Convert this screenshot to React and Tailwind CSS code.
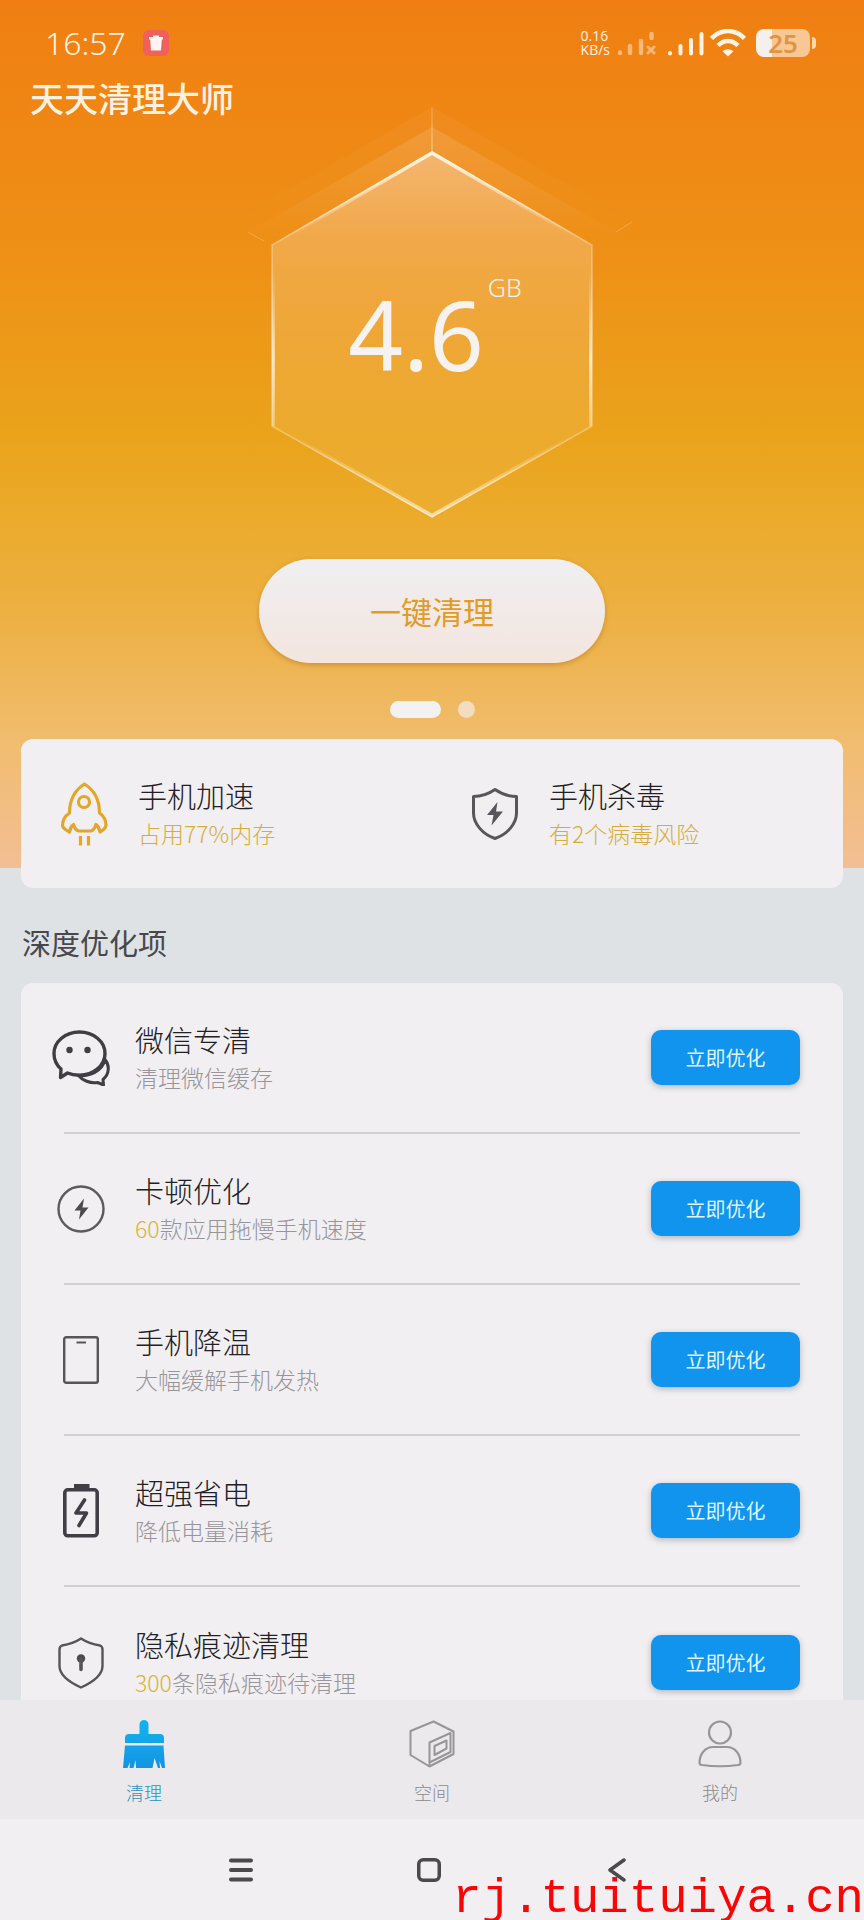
const CJK = "font-['Noto_Sans_CJK_SC',sans-serif]";

function StatusBar() {
  return (
    <div className="flex h-[86px] items-center pl-[45px] pr-[48px] text-[#fdf3e4]">
      <span className="font-['Noto_Sans',sans-serif] text-[32px] leading-[40px] font-light">16:57</span>
      <svg className="ml-4 h-7 w-7" viewBox="0 0 28 28" aria-hidden="true">
        <rect x="1" y="1" width="26" height="26" rx="6" fill="#f0605c" />
        <path d="M7 8h4V6.500h6V8h4v2.500h-1.200L19 21.500H9L8.200 10.500H7Z" fill="#fdf5f2" />
      </svg>
      <div className="ml-auto flex items-center">
        <div className="font-['Open_Sans',sans-serif] text-[14px] leading-[14px]">
          <div>0.16</div>
          <div>KB/s</div>
        </div>
        <svg className="ml-1.5 h-7 w-10" viewBox="0 0 40 28" aria-hidden="true" stroke="#f8b878" strokeWidth="4.500" strokeLinecap="round">
          <path d="M4 23.500v.5M14 17v7M25 12v12M35.500 5v4" />
          <path d="M32 18l6 6M38 18l-6 6" strokeWidth="3" />
        </svg>
        <svg className="ml-2.5 h-7 w-10" viewBox="0 0 40 28" aria-hidden="true" stroke="#fdf3e4" strokeWidth="4" strokeLinecap="round">
          <path d="M4 24v.5M14.500 17v7.500M25 11v13.500M35.500 5v19.500" />
        </svg>
        <svg className="ml-1 h-7 w-9" viewBox="0 0 36 28" aria-hidden="true" fill="none" stroke="#fdf3e4" strokeWidth="4.500">
          <path d="M1.500 9.500C11 -.5 25 -.5 34.500 9.500" />
          <path d="M8 16.500C14 10.500 22 10.500 28 16.500" />
          <path d="M18 27.500l-5.500-5.200C15.500 19.500 20.500 19.500 23.500 22.300Z" fill="#fdf3e4" stroke="none" />
        </svg>
        <div className="ml-2.5 flex items-center gap-0.5">
          <div className="flex h-7 w-[54px] items-center justify-center rounded-lg bg-linear-to-r from-[#f5f0ee] from-30% to-[#f8c894] to-30% font-['Noto_Sans',sans-serif] text-[26px] leading-7 font-semibold text-[#df9446]">
            25
          </div>
          <div className="h-3 w-1 rounded-r-full bg-[#fbd9b4]" />
        </div>
      </div>
    </div>
  );
}

function Hexagon() {
  return (
    <svg className="absolute inset-0 h-full w-full overflow-visible" viewBox="0 0 400 420" fill="none" aria-hidden="true">
      <defs>
        <linearGradient id="face" x1="0" y1="0" x2="0" y2="1">
          <stop offset="0" stopColor="#f8d8b8" stopOpacity=".46" />
          <stop offset=".5" stopColor="#f4d090" stopOpacity=".26" />
          <stop offset="1" stopColor="#f4d080" stopOpacity=".08" />
        </linearGradient>
        <linearGradient id="halo" x1="0" y1="0" x2="0" y2="1">
          <stop offset="0" stopColor="#fff" stopOpacity=".13" />
          <stop offset=".3" stopColor="#fff" stopOpacity="0" />
        </linearGradient>
        <linearGradient id="edge" x1="0" y1="0" x2="0" y2="1">
          <stop offset="0" stopColor="#fff4dc" />
          <stop offset=".25" stopColor="#fff" stopOpacity=".3" />
          <stop offset=".5" stopColor="#fff" stopOpacity=".5" />
          <stop offset=".78" stopColor="#fff" stopOpacity=".3" />
          <stop offset="1" stopColor="#fff0d8" stopOpacity=".7" />
        </linearGradient>
        <linearGradient id="shineX" gradientUnits="userSpaceOnUse" x1="60" y1="0" x2="340" y2="0">
          <stop offset="0" stopColor="#fff4dc" stopOpacity="0" />
          <stop offset=".5" stopColor="#fff4dc" />
          <stop offset="1" stopColor="#fff4dc" stopOpacity="0" />
        </linearGradient>
        <linearGradient id="shineY" gradientUnits="userSpaceOnUse" x1="0" y1="180" x2="0" y2="400">
          <stop offset="0" stopColor="#fff" stopOpacity="0" />
          <stop offset=".4" stopColor="#fff" stopOpacity=".75" />
          <stop offset="1" stopColor="#fff" stopOpacity="0" />
        </linearGradient>
        <linearGradient id="spoke" gradientUnits="userSpaceOnUse" x1="0" y1="17" x2="0" y2="62">
          <stop offset="0" stopColor="#ffe0b0" stopOpacity=".3" />
          <stop offset="1" stopColor="#ffe0b0" stopOpacity=".8" />
        </linearGradient>
      </defs>
      <path d="M200 17 400 132V322L200 420 0 322V132Z" fill="url(#halo)" opacity=".35" />
      <path d="M200 37 384 142V310L200 410 16 310V142Z" fill="url(#halo)" />
      <rect x="199.500" y="17" width="1" height="45" fill="url(#spoke)" />
      <path d="M16 142l16 9M384 142l16-10" stroke="#ffe0b0" strokeOpacity=".3" />
      <path d="M200 62 360 155V336L200 427 40 336V155Z" fill="url(#face)" />
      <path d="M200 62 360 155V336L200 427 40 336V155Z" stroke="url(#edge)" strokeWidth="1.500" />
      <path d="M60 144.500 200 63l140 81.500" stroke="url(#shineX)" strokeWidth="3.500" />
      <path d="M41.500 180V336M358.500 180V336" stroke="url(#shineY)" strokeWidth="2.500" />
      <path d="M60 346 200 425.500 340 346" stroke="url(#shineX)" strokeWidth="3.500" strokeOpacity=".65" />
    </svg>
  );
}

function RocketIcon() {
  return (
    <svg className="h-16 w-12 shrink-0" viewBox="0 0 48 64" fill="none" stroke="#e3a62a" strokeWidth="3.200" strokeLinejoin="round" aria-hidden="true">
      <path d="M24.500 2C15 8 9.500 18.500 9.500 31C5 34 2.500 38.500 2.500 43.500C3 46.500 5.500 48 9.500 50C10 46.500 11.500 44 13.500 42.500C14.500 46 16 48 18.500 49H31C33.500 48 35 46 36 42.500C38 44 39.500 46.500 40 50C43.500 48 45.500 46.500 46 43.500C46 38.500 44 34 39.500 31C39.500 18.500 34 8 24.500 2Z" />
      <circle cx="24" cy="20" r="5.500" />
      <path d="M20.500 54v9.500M28.500 54v9.500" />
    </svg>
  );
}

function VirusShieldIcon() {
  return (
    <svg className="h-[54px] w-12 shrink-0" viewBox="0 0 48 54" fill="none" stroke="#58565c" strokeWidth="3" strokeLinejoin="round" aria-hidden="true">
      <path d="M24 2.500C17.500 7 10 9.500 2.500 9.500V26C2.500 37 12 47.500 24 51.500C36 47.500 45.500 37 45.500 26V9.500C38 9.500 30.500 7 24 2.500Z" />
      <path d="M26.500 15 16 28h6.500L20.500 38.500 32 24.500h-7Z" fill="#58565c" stroke="none" />
    </svg>
  );
}

function ChatIcon() {
  return (
    <svg className="h-14 w-[58px] shrink-0" viewBox="0 0 58 56" fill="none" stroke="#403d44" strokeWidth="3.400" strokeLinejoin="round" aria-hidden="true">
      <path d="M27.500 2C13.500 2 2 11.500 2 23.500C2 30.500 5 35.500 9 39L8.500 47.500L15.500 43C19 44.600 23 45.300 27.500 45.300C41.500 45.300 53 35.500 53 23.500S41.500 2 27.500 2Z" />
      <path d="M53 29.500C55.500 32.500 56.500 36 56.200 39.500C56 43.500 54 47 51 49.500L51.500 55L45.500 52.500C38 53.500 30.500 50.500 26.500 45.500C37 46.500 50.500 41.500 53 29.500Z" strokeWidth="3" />
      <circle cx="17.500" cy="20" r="3.200" fill="#403d44" stroke="none" />
      <circle cx="35.500" cy="20" r="3.200" fill="#403d44" stroke="none" />
    </svg>
  );
}

function BoltCircleIcon() {
  return (
    <svg className="h-12 w-12 shrink-0" viewBox="0 0 48 48" fill="none" stroke="#5c595f" strokeWidth="2.400" aria-hidden="true">
      <circle cx="24" cy="24" r="22.500" />
      <path d="M27 13.500 17.500 25.500h6L22 34.500 31.500 22.500h-6Z" fill="#4c494f" stroke="none" />
    </svg>
  );
}

function PhoneIcon() {
  return (
    <svg className="h-12 w-9 shrink-0" viewBox="0 0 36 48" fill="none" stroke="#57545a" strokeWidth="2.400" aria-hidden="true">
      <rect x="1.200" y="1.200" width="33.600" height="45.600" rx="2" />
      <path d="M13.500 6.500h9.500" strokeWidth="2" />
    </svg>
  );
}

function BatteryIcon() {
  return (
    <svg className="h-[54px] w-9 shrink-0" viewBox="0 0 36 54" fill="none" stroke="#413f45" strokeWidth="3.600" aria-hidden="true">
      <rect x="1.800" y="5.800" width="32.400" height="46" rx="3" />
      <path d="M11 3h15.500" strokeWidth="6" />
      <path d="M21.500 16 13 29h10.500L16 41.500" strokeLinecap="round" strokeLinejoin="round" />
    </svg>
  );
}

function LockShieldIcon() {
  return (
    <svg className="h-[52px] w-[46px] shrink-0" viewBox="0 0 46 52" fill="none" stroke="#57545a" strokeWidth="2.400" strokeLinejoin="round" aria-hidden="true">
      <path d="M23 1.500C17 5.500 10.500 7.500 4 8.500Q1.500 9.500 1.500 12.500V29C1.500 38.500 12 45.500 23 50.500C34 45.500 44.500 38.500 44.500 29V12.500Q44.500 9.500 42 8.500C35.500 7.500 29 5.500 23 1.500Z" />
      <circle cx="23" cy="21.500" r="4.200" fill="#4c494f" stroke="none" />
      <path d="M23 22v10.500" strokeWidth="3.600" strokeLinecap="round" />
    </svg>
  );
}

function BrushIcon() {
  return (
    <svg className="h-12 w-[42px]" viewBox="0 0 42 48" aria-hidden="true">
      <defs>
        <linearGradient id="brush" x1="0" y1="0" x2="0" y2="1">
          <stop offset="0" stopColor="#12b4f0" />
          <stop offset="1" stopColor="#1494e2" />
        </linearGradient>
      </defs>
      <path fill="url(#brush)" d="M16.500 4.500a4.500 4.500 0 0 1 9 0V14H37q4 0 4 4v5H2v-5q0-4 4-4h10.500ZM2 25.500H40.500L42 48H39L36.500 41l.5 7h-2L31.500 38 29.500 48H13L12.500 40l-2 8H6.500L7 42 4.500 48H0Z" />
    </svg>
  );
}

function SpaceIcon() {
  return (
    <svg className="h-12 w-[46px]" viewBox="0 0 46 48" fill="none" stroke="#989499" strokeWidth="2" strokeLinejoin="round" aria-hidden="true">
      <path d="M24.500 1.500 1.500 11V35L20.500 46.500 44.500 34V11.500Z" />
      <path d="M20.500 46.500V22.500L41.500 13V32L20.500 42.500" />
      <path d="M25.500 35V26L37.500 20.500V28.500Z" />
    </svg>
  );
}

function PersonIcon() {
  return (
    <svg className="h-12 w-11" viewBox="0 0 44 48" fill="none" stroke="#989499" strokeWidth="2.200" aria-hidden="true">
      <circle cx="22" cy="12.500" r="11" />
      <path d="M1.500 43C1.500 33 8 27 15 27H29C36 27 42.500 33 42.500 43Q42.500 44.500 40 45Q22 47.500 4 45Q1.500 44.500 1.500 43Z" strokeLinejoin="round" />
    </svg>
  );
}

const quick = [
  { title: "手机加速", note: "占用77%内存", Icon: RocketIcon },
  { title: "手机杀毒", note: "有2个病毒风险", Icon: VirusShieldIcon },
];

const items = [
  { title: "微信专清", count: "", note: "清理微信缓存", Icon: ChatIcon },
  { title: "卡顿优化", count: "60", note: "款应用拖慢手机速度", Icon: BoltCircleIcon },
  { title: "手机降温", count: "", note: "大幅缓解手机发热", Icon: PhoneIcon },
  { title: "超强省电", count: "", note: "降低电量消耗", Icon: BatteryIcon },
  { title: "隐私痕迹清理", count: "300", note: "条隐私痕迹待清理", Icon: LockShieldIcon },
];

const tabs = [
  { label: "清理", Icon: BrushIcon, color: "text-[#2b93bd]" },
  { label: "空间", Icon: SpaceIcon, color: "text-[#8d898e]" },
  { label: "我的", Icon: PersonIcon, color: "text-[#8d898e]" },
];

export default function App() {
  return (
    <div className={`relative flex h-screen flex-col overflow-hidden bg-[#dee2e5] ${CJK}`}>
      <main className="min-h-0 flex-1 overflow-y-auto [scrollbar-width:none]">
        <header className="bg-[linear-gradient(#f07e12,#ee9116_30%,#eaa31b_50%,#ebab2c_60%,#edb145_72%,#f1bd70_86%,#f3be94)] pb-[150px]">
          <StatusBar />
          <h1 className="h-[4px] px-[30px] text-[34px] leading-[24px] font-medium text-[#fcf1e2]">天天清理大师</h1>
          <div className="relative mx-auto flex h-[420px] w-[400px] items-center justify-center">
            <Hexagon />
            <p className="relative flex items-start gap-1 pt-14 pl-1.5 font-['Noto_Sans',sans-serif] text-[#f5f2f0]">
              <span className="mt-3 text-[96px] leading-[100px]">4.6</span>
              <span className="text-[25px] leading-[30px] font-light">GB</span>
            </p>
          </div>
          <div className="mt-[49px] flex flex-col items-center">
            <button type="button" className="h-[104px] w-[346px] rounded-full bg-linear-to-b from-[#efeff1] to-[#f3e5df] text-[31px] text-[#e39b24] shadow-[0_2px_5px_rgba(150,90,20,0.4)]">
              一键清理
            </button>
            <div className="mt-[38px] flex items-center gap-[17px]">
              <span className="h-[17px] w-[51px] rounded-full bg-[#f2f2f3]" />
              <span className="h-[17px] w-[17px] rounded-full bg-[#f3dcbf]" />
            </div>
          </div>
        </header>

        <section className="relative mx-[21px] -mt-[129px] grid h-[149px] grid-cols-2 rounded-xl bg-[#f1eff1]">
          {quick.map(({ title, note, Icon }) => (
            <a key={title} href="#" className="flex items-center">
              <span className="ml-[34px] flex w-[58px] justify-center">
                <Icon />
              </span>
              <span className="ml-[25px] flex flex-col pb-0.5">
                <span className="text-[29px] leading-[40px] font-light text-[#222024]">{title}</span>
                <span className="text-[23px] leading-[36px] font-light text-[#d5ad3c]">{note}</span>
              </span>
            </a>
          ))}
        </section>

        <h2 className="px-[22px] pt-[34px] pb-[21px] text-[29px] leading-[40px] text-[#48484c]">深度优化项</h2>

        <ul className="mx-[21px] rounded-t-xl bg-[#f1eff1] px-[43px]">
          {items.map(({ title, count, note, Icon }) => (
            <li key={title} className="flex h-[151px] items-center border-b-2 border-[#d2ced2] last:border-b-0">
              <span className="flex w-[34px] shrink-0 justify-center">
                <Icon />
              </span>
              <div className="ml-[37px] flex-1 pb-0.5">
                <h3 className="text-[29px] leading-[40px] font-light text-[#222024]">{title}</h3>
                <p className="text-[23px] leading-[36px] font-light text-[#98959a]">
                  {count && <span className="text-[#d8b440]">{count}</span>}
                  {note}
                </p>
              </div>
              <button type="button" className="h-[55px] w-[149px] rounded-[10px] bg-[#1094ee] text-[20px] text-[#dff4fb] shadow-[0_2px_6px_rgba(60,80,100,0.35)]">
                立即优化
              </button>
            </li>
          ))}
        </ul>
      </main>

      <nav className="grid h-[119px] shrink-0 grid-cols-3 bg-[#ebe9eb]">
        {tabs.map(({ label, Icon, color }) => (
          <a key={label} href="#" className={`flex flex-col items-center pt-5 text-[18px] leading-[24px] font-light ${color}`}>
            <Icon />
            <span className="mt-3">{label}</span>
          </a>
        ))}
      </nav>

      <div className="flex h-[101px] shrink-0 items-center justify-center gap-[140px] bg-[#f1eff1] pr-1.5 text-[#4c494e]">
        <button type="button" aria-label="菜单" className="flex h-12 w-12 items-center justify-center">
          <svg className="h-6 w-6" viewBox="0 0 24 24" stroke="currentColor" strokeWidth="4" strokeLinecap="round">
            <path d="M2 2.500h20M2 12h20M2 21.500h20" />
          </svg>
        </button>
        <button type="button" aria-label="主页" className="flex h-12 w-12 items-center justify-center">
          <svg className="h-6 w-6" viewBox="0 0 24 24" fill="none" stroke="currentColor" strokeWidth="3.500">
            <rect x="1.750" y="1.750" width="20.500" height="20.500" rx="4.500" />
          </svg>
        </button>
        <button type="button" aria-label="返回" className="flex h-12 w-12 items-center justify-center">
          <svg className="h-6 w-6" viewBox="0 0 24 24" fill="none" stroke="currentColor" strokeWidth="3.500" strokeLinecap="round" strokeLinejoin="round">
            <path d="M19 2 5 12l14 10" />
          </svg>
        </button>
      </div>

      <p className="absolute right-0 bottom-0 font-['Liberation_Mono',monospace] text-[49px] leading-[42px] text-[#fa0505]">rj.tuituiya.cn</p>
    </div>
  );
}
